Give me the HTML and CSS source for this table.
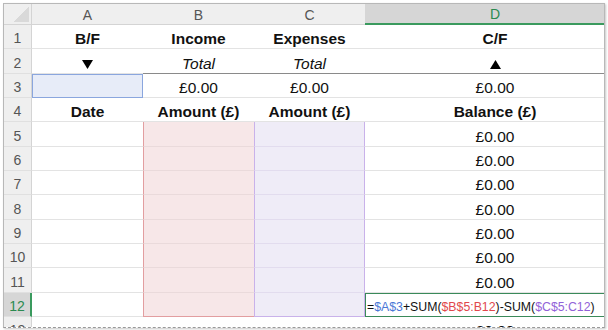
FILE: index.html
```html
<!DOCTYPE html>
<html>
<head>
<meta charset="utf-8">
<link rel="stylesheet" href="styles.css">
</head>
<body>
<div class="frame">
  <div class="sheet">
    <div class="corner"></div>
    <div class="ch">A</div>
    <div class="ch">B</div>
    <div class="ch">C</div>
    <div class="ch sel">D</div>

    <div class="rh">1</div>
    <div class="c b">B/F</div>
    <div class="c b">Income</div>
    <div class="c b">Expenses</div>
    <div class="c b">C/F</div>

    <div class="rh">2</div>
    <div class="c"><svg class="tri" width="11" height="9" viewBox="0 0 11 9"><polygon points="0,0 11,0 5.5,9" fill="#000"/></svg></div>
    <div class="c i ul">Total</div>
    <div class="c i ul">Total</div>
    <div class="c ul"><svg class="tri" width="11" height="9" viewBox="0 0 11 9"><polygon points="0,9 11,9 5.5,0" fill="#000"/></svg></div>

    <div class="rh">3</div>
    <div class="c bf"></div>
    <div class="c">£0.00</div>
    <div class="c">£0.00</div>
    <div class="c">£0.00</div>

    <div class="rh">4</div>
    <div class="c b">Date</div>
    <div class="c b">Amount (£)</div>
    <div class="c b">Amount (£)</div>
    <div class="c b">Balance (£)</div>

    <div class="rh">5</div><div class="c"></div><div class="c inc"></div><div class="c exp"></div><div class="c">£0.00</div>
    <div class="rh">6</div><div class="c"></div><div class="c inc"></div><div class="c exp"></div><div class="c">£0.00</div>
    <div class="rh">7</div><div class="c"></div><div class="c inc"></div><div class="c exp"></div><div class="c">£0.00</div>
    <div class="rh">8</div><div class="c"></div><div class="c inc"></div><div class="c exp"></div><div class="c">£0.00</div>
    <div class="rh">9</div><div class="c"></div><div class="c inc"></div><div class="c exp"></div><div class="c">£0.00</div>
    <div class="rh">10</div><div class="c"></div><div class="c inc"></div><div class="c exp"></div><div class="c">£0.00</div>
    <div class="rh">11</div><div class="c"></div><div class="c inc"></div><div class="c exp"></div><div class="c">£0.00</div>

    <div class="rh rsel">12</div>
    <div class="c"></div>
    <div class="c inc last"></div>
    <div class="c exp last"></div>
    <div class="c active"><span class="f"><span class="eq">=</span><span class="r1">$A$3</span>+SUM(<span class="r2">$B$5:B12</span>)-SUM(<span class="r3">$C$5:C12</span>)</span></div>

    <div class="rh">13</div><div class="c"></div><div class="c"></div><div class="c"></div><div class="c">£0.00</div>
  </div>
</div>
</body>
</html>
```
FILE: styles.css
```css
* { box-sizing: border-box; }
html, body {
  margin: 0;
  padding: 0;
  background: #ffffff;
}
body {
  width: 608px;
  height: 330px;
  overflow: hidden;
  font-family: "Liberation Sans", Arial, sans-serif;
}
.frame {
  margin: 3px 0 0 3px;
  width: 602px;
  height: 325px;
  border: 1px solid #b8b8b8;
  border-bottom: 1px dashed #9a9a9a;
  box-shadow: 1px 1px 2px rgba(0, 0, 0, 0.22);
  overflow: hidden;
  background: #fff;
}
.sheet {
  display: grid;
  grid-template-columns: 28px 111px 111px 111px 260px;
  grid-template-rows: 21px repeat(13, 24.33px);
  width: 621px;
}
.corner {
  background: #efefef linear-gradient(to top left, #d9d9d9 50%, transparent 50%) no-repeat;
  background-size: 16px 16px;
  background-position: right 2px bottom 2px;
  border-right: 1px solid #d4d4d4;
  border-bottom: 1px solid #d4d4d4;
}
.ch {
  background: #efefef;
  color: #555;
  font-size: 14px;
  display: flex;
  align-items: center;
  justify-content: center;
  border-bottom: 1px solid #d4d4d4;
  padding-top: 1px;
}
.ch.sel {
  background: #d6d6d6;
  color: #2b8a50;
  border-bottom: 2px solid #3a9a5e;
}
.rh {
  background: #efefef;
  color: #555;
  font-size: 14px;
  line-height: 17px;
  display: flex;
  align-items: flex-end;
  justify-content: center;
  border-bottom: 1px solid #e0e0e0;
  border-right: 1px solid #d4d4d4;
  padding-bottom: 1px;
}
.rh.rsel {
  background: #d6d6d6;
  color: #2b8a50;
  border-right: 2px solid #3a9a5e;
}
.c {
  font-size: 15.5px;
  line-height: 17px;
  color: #111;
  display: flex;
  align-items: flex-end;
  justify-content: center;
  border-bottom: 1px solid #e3e3e3;
  padding-bottom: 1px;
  white-space: nowrap;
}
.b { font-weight: bold; }
.i { font-style: italic; }
.ul { border-bottom-color: #8a8a8a; }
.tri { margin-bottom: 3px; }
.bf {
  background: #e7ecf8;
  border: 1px solid #8aa6de;
}
.inc {
  background: #f7e7e8;
  border-left: 1px solid #e29ea0;
  border-bottom-color: #eadadb;
}
.exp {
  background: #efecf7;
  border-left: 1px solid #c9b2ea;
  border-right: 1px solid #c9b2ea;
  border-bottom-color: #e2dcee;
}
.inc.last { border-bottom: 1px solid #e29ea0; }
.exp.last { border-bottom: 1px solid #c9b2ea; }
.active {
  border: 1px solid #3a8a5a;
  justify-content: flex-start;
  padding-left: 1px;
}
.f {
  font-size: 12.3px;
  line-height: 14px;
  color: #111;
  margin-bottom: 1px;
}
.eq { color: #111; }
.r1 { color: #4a78d6; }
.r2 { color: #e0474c; }
.r3 { color: #9162d8; }
```
